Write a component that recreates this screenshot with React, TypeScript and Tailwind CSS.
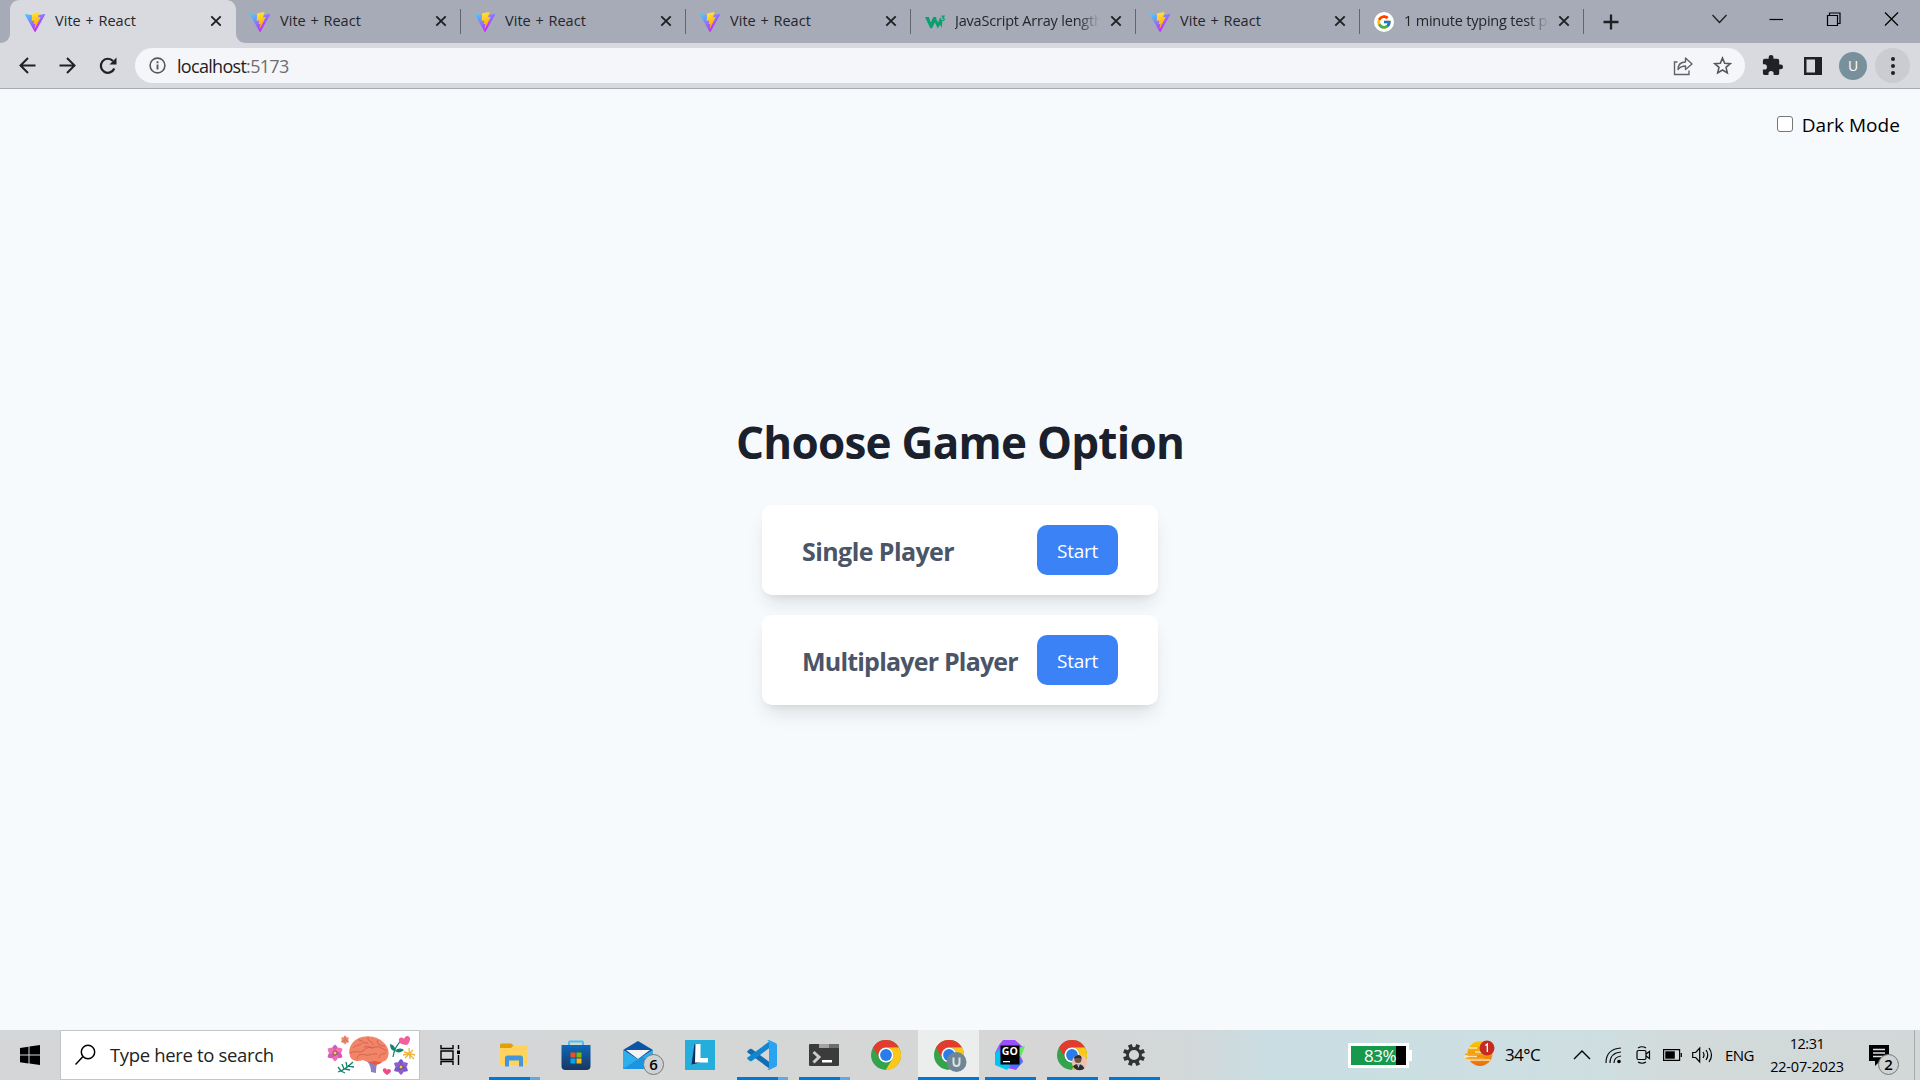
import React from "react";

type P = { children?: React.ReactNode; className?: string };

const seg = "font-['Open_Sans','Noto_Sans',sans-serif]";

function ViteIcon() {
  return (
    <svg width="20" height="20" viewBox="0 0 32 32" className="shrink-0">
      <defs>
        <linearGradient id="va" x1="0" x2="0.6" y1="0.05" y2="0.8">
          <stop offset="0" stopColor="#41d1ff" />
          <stop offset="1" stopColor="#bd34fe" />
        </linearGradient>
        <linearGradient id="vb" x1="0.4" x2="0.6" y1="0" y2="0.9">
          <stop offset="0" stopColor="#ffea83" />
          <stop offset="0.1" stopColor="#ffdd35" />
          <stop offset="1" stopColor="#ffa800" />
        </linearGradient>
      </defs>
      <path fill="url(#va)" d="M31.9 4.6 16.9 31.4a.95.95 0 0 1-1.6 0L.1 4.6a.95.95 0 0 1 1-1.4L16 5.9l14.9-2.7a.95.95 0 0 1 1 1.4Z" />
      <path fill="url(#vb)" d="M22.7.1 11.7 2.2a.4.4 0 0 0-.3.4l-.7 11.4c0 .3.2.5.5.4l3-.7c.3 0 .5.2.5.5l-1 4.5c0 .3.2.5.5.5l1.9-.6c.3 0 .6.2.5.5l-1.4 7c-.1.4.5.6.7.2l.2-.2 9-17.7c.1-.3-.1-.6-.5-.6l-3.200.6a.4.4 0 0 1-.4-.5L23.200.6a.4.4 0 0 0-.5-.5Z" />
    </svg>
  );
}

function GoogleIcon() {
  return (
    <svg width="20" height="20" viewBox="0 0 20 20" className="shrink-0">
      <circle cx="10" cy="10" r="10" fill="#fff" />
      <g transform="translate(2 2) scale(.333)">
        <path fill="#FFC107" d="M43.6 20H24v8h11.300C33.700 32.700 29.200 36 24 36a12 12 0 1 1 7.900-21l5.700-5.700A20 20 0 1 0 43.600 20z" />
        <path fill="#FF3D00" d="m6.300 14.700 6.600 4.800A12 12 0 0 1 32 15l5.700-5.700A20 20 0 0 0 6.300 14.700z" />
        <path fill="#4CAF50" d="M24 44c5.200 0 9.900-2 13.400-5.200l-6.200-5.200A12 12 0 0 1 12.700 28l-6.500 5A20 20 0 0 0 24 44z" />
        <path fill="#1976D2" d="M43.600 20H24v8h11.300a12 12 0 0 1-4.100 5.600l6.200 5.200C37 39.200 44 34 44 24c0-1.300-.1-2.700-.4-4z" />
      </g>
    </svg>
  );
}

function W3Icon() {
  return (
    <svg width="20" height="20" viewBox="0 0 20 20" className="shrink-0">
      <path fill="#0aa06e" d="M0 5h3.800l2 5.600L8.300 5h3.200l-.4 1.200 2 4.600 2-5.800 2.200 5.200-.7 5.800-1.500-3.200-2.400 3.800L10 10.500 7 16.300H5.200z" />
      <path fill="none" stroke="#0aa06e" strokeWidth="1.200" d="M16.300 4.200h2.800l-1.500 1.800c2.300 0 2.200 2.600-.2 2.600l-1.200-.4" />
    </svg>
  );
}

function TabClose() {
  return (
    <svg width="12" height="12" viewBox="0 0 12 12" className="shrink-0" stroke="#1f2023" strokeWidth="1.900">
      <path d="M1.300 1.300 10.700 10.700M10.700 1.300 1.300 10.700" />
    </svg>
  );
}

function Tab({ icon, title, active, sep, fade, narrow }: { icon: React.ReactNode; title: string; active?: boolean; sep?: boolean; fade?: boolean; narrow?: boolean }) {
  return (
    <div className={`relative flex h-[43px] shrink-0 items-center pl-[15px] ${narrow ? "w-[224px]" : "w-[225px]"}`}>
      {active && (
        <svg className="absolute top-0 -left-[10px]" width="246" height="43" viewBox="0 0 246 43">
          <path fill="#d9dae0" d="M0 43C6 43 10 39 10 33V10C10 4 14 0 20 0H226C232 0 236 4 236 10V33C236 39 240 43 246 43Z" />
        </svg>
      )}
      <div className="relative flex items-center">
        {icon}
        <div className={`ml-[10px] h-[22px] w-[145px] overflow-hidden text-[14.500px] leading-[20px] whitespace-nowrap text-[#24262b] ${seg} ${fade ? "tracking-[-0.2px] [mask-image:linear-gradient(to_right,black_85%,transparent)]" : "tracking-[0.05px] [word-spacing:0.800px]"}`}>
          {title}
        </div>
      </div>
      <div className="absolute top-[15px] right-[13px]">
        <TabClose />
      </div>
      {sep && <div className="absolute top-[9px] -right-px h-[25px] w-px bg-[#62656c]" />}
    </div>
  );
}

function TabStrip() {
  return (
    <div className="flex h-[43px] items-center bg-[#a7abb7] pl-[10px]">
      <Tab icon={<ViteIcon />} title="Vite + React" active />
      <Tab icon={<ViteIcon />} title="Vite + React" sep />
      <Tab icon={<ViteIcon />} title="Vite + React" sep />
      <Tab icon={<ViteIcon />} title="Vite + React" sep />
      <Tab icon={<W3Icon />} title="JavaScript Array length" sep fade />
      <Tab icon={<ViteIcon />} title="Vite + React" sep narrow />
      <Tab icon={<GoogleIcon />} title="1 minute typing test pa" sep narrow fade />
      <svg className="ml-[20px] shrink-0" width="16" height="16" viewBox="0 0 16 16" stroke="#1f2023" strokeWidth="2.300">
        <path d="M8 .500V15.500M.500 8H15.500" />
      </svg>
      <div className="mb-[5px] ml-auto flex items-center">
        <svg width="58" height="20" viewBox="0 0 58 20" fill="none" stroke="#1a1a1a" strokeWidth="1.200"><path d="m22.500 6 7 7.500 7-7.500" /></svg>
        <svg width="57" height="20" viewBox="0 0 57 20" fill="none" stroke="#000" strokeWidth="1.200"><path d="M21.500 10.500h13.500" /></svg>
        <svg width="58" height="20" viewBox="0 0 58 20" fill="none" stroke="#000" strokeWidth="1.200"><path d="M22.500 6.500h10v10h-10zM24.500 6.500v-2.500h10.500v10.500h-2.500" /></svg>
        <svg width="57" height="20" viewBox="0 0 57 20" fill="none" stroke="#000" strokeWidth="1.200"><path d="m22 3.500 13 13M35 3.500l-13 13" /></svg>
      </div>
    </div>
  );
}

function Toolbar() {
  return (
    <div className="flex h-[46px] items-center border-b border-[#a9abb0] bg-[#d9dae0] pl-[18px]">
      <svg width="20" height="20" viewBox="0 0 20 20" fill="none" stroke="#202124" strokeWidth="2"><path d="M17.500 9.500H2.500M10 2 2.500 9.500 10 17" /></svg>
      <svg className="ml-[20px]" width="20" height="20" viewBox="0 0 20 20" fill="none" stroke="#202124" strokeWidth="2"><path d="M1.500 9.500H16.500M9 2l7.500 7.500L9 17" /></svg>
      <svg className="ml-[20px]" width="20" height="20" viewBox="0 0 20 20" fill="none" stroke="#202124" strokeWidth="2.200"><path d="M16.300 12.500A7 7 0 1 1 15 5" /><path d="M18.500 1.500v7h-7z" fill="#202124" stroke="none" /></svg>
      <div className="ml-[17px] flex h-[35px] w-[1610px] items-center rounded-full bg-[#f5f6f9] pl-[14px]">
        <svg width="17" height="17" viewBox="0 0 17 17" fill="none" stroke="#55585d" strokeWidth="1.600"><circle cx="8.500" cy="8.500" r="7.400" /><path d="M8.500 7.500v5M8.500 4.300v1.900" strokeWidth="1.900" /></svg>
        <div className={`ml-[11px] text-[18px] leading-[24px] tracking-[-0.700px] text-[#202124] ${seg}`}>localhost<span className="text-[#6b6e73]">:5173</span></div>
        <svg className="ml-auto" width="20" height="20" viewBox="0 0 20 20" fill="none" stroke="#5f6368" strokeWidth="1.400"><path d="M4.500 6H1.500v12.500H16v-4" /><path d="M5 13.500C5 8.500 8 6 12.500 6V2L19 8l-6.500 5.500V10C9.500 10 7 11 5 13.500z" strokeLinejoin="round" /></svg>
        <svg className="mr-[13px] ml-[20px]" width="19" height="19" viewBox="0 0 19 19" fill="none" stroke="#55585d" strokeWidth="1.600"><path d="m9.500 2 2.200 5.200 5.600.5-4.300 3.700 1.300 5.500-4.800-2.900-4.800 2.900L6 11.400 1.700 7.700l5.600-.5z" /></svg>
      </div>
      <svg className="ml-[16px]" width="23" height="23" viewBox="0 0 24 24" fill="#202124"><path d="M20.500 11H19V7a2 2 0 0 0-2-2h-4V3.500a2.500 2.500 0 0 0-5 0V5H4a2 2 0 0 0-2 2v3.800h1.500a2.700 2.700 0 0 1 0 5.400H2V20c0 1.100.9 2 2 2h3.800v-1.500a2.700 2.700 0 0 1 5.400 0V22H17a2 2 0 0 0 2-2v-4h1.500a2.500 2.500 0 0 0 0-5z" /></svg>
      <svg className="ml-[20px]" width="18" height="18" viewBox="0 0 18 18"><path fill="#202124" fillRule="evenodd" d="M0 0h18v18H0zM2.500 2.500v13h8.500v-13z" /></svg>
      <div className={`ml-[17px] flex h-[28px] w-[28px] items-center justify-center rounded-full bg-[#78909c] text-[14px] text-white ${seg}`}>U</div>
      <div className="ml-[8px] flex h-[35px] w-[35px] flex-col items-center justify-center gap-[3px] rounded-full bg-[#cbccd1]">
        <i className="h-[4px] w-[4px] rounded-full bg-[#202124]" />
        <i className="h-[4px] w-[4px] rounded-full bg-[#202124]" />
        <i className="h-[4px] w-[4px] rounded-full bg-[#202124]" />
      </div>
    </div>
  );
}

function Option({ label, tracking }: { label: string; tracking: string }) {
  return (
    <div className="flex h-[90px] w-[396px] items-center justify-between rounded-[10px] bg-white px-[40px] shadow-[0_12px_19px_-4px_rgba(0,0,0,0.1),0_5px_8px_-5px_rgba(0,0,0,0.1)]">
      <div className={`pt-[2px] text-[25px] leading-[35px] font-bold whitespace-nowrap text-[#4a5568] ${tracking}`}>{label}</div>
      <button className="h-[50px] w-[81px] shrink-0 rounded-[10px] bg-[#3b82f6] pt-[2px] text-[19px] leading-[30px] tracking-[-0.3px] text-white">Start</button>
    </div>
  );
}

function Page() {
  return (
    <main className={`flex h-[941px] flex-col bg-[#f7fafc] ${seg}`}>
      <label className="flex h-[70px] items-center justify-end pr-[20px] text-[19px] text-black">
        <span className="mr-[9px] h-[16px] w-[16px] rounded-[3px] border border-[#767676] bg-white" />
        <span className="pt-[2px] tracking-[0.050px]">Dark Mode</span>
      </label>
      <div className="mt-[258px] flex flex-col items-center">
        <h1 className="text-[44px] leading-[50px] font-bold tracking-[-0.730px] whitespace-nowrap text-[#1a202c]">Choose Game Option</h1>
        <div className="mt-[38px] flex flex-col gap-[20px]">
          <Option label="Single Player" tracking="tracking-[-0.580px]" />
          <Option label="Multiplayer Player" tracking="tracking-[-0.800px]" />
        </div>
      </div>
    </main>
  );
}

function Chrome({ children }: P) {
  return (
    <svg width="34" height="32" viewBox="0 0 34 32">
      <circle cx="15" cy="15" r="15" fill="#34a34b" />
      <path fill="#e33b2e" d="M2 7.500A15 15 0 0 1 28 7.500H15A7.500 7.500 0 0 0 8.500 18.800z" />
      <path fill="#fdc719" d="M28 7.500A15 15 0 0 1 14.700 30l6.800-11.200A7.500 7.500 0 0 0 15 7.500z" />
      <circle cx="15" cy="15" r="7.500" fill="#fff" />
      <circle cx="15" cy="15" r="5.900" fill="#2c7bea" />
      {children}
    </svg>
  );
}

function Task({ children, state }: P & { state?: "run" | "multi" | "active" }) {
  return (
    <div className={`relative flex h-[50px] shrink-0 items-center justify-center ${state === "active" ? "ml-px w-[61px] bg-[#eceeee]" : "w-[62px]"}`}>
      {children}
      {state === "run" && <div className="absolute bottom-0 left-[6px] h-[3px] w-[51px] bg-[#0078d7]" />}
      {state === "active" && <div className="absolute bottom-0 left-0 h-[3px] w-full bg-[#0078d7]" />}
      {state === "multi" && (
        <div className="absolute bottom-0 left-[6px] flex h-[3px]">
          <i className="w-[41px] bg-[#0078d7]" />
          <i className="w-[10px] bg-[#62a9e4]" />
        </div>
      )}
    </div>
  );
}

function Flower({ x, y, s, a, b }: { x: number; y: number; s: number; a: string; b: string }) {
  return (
    <g transform={`translate(${x} ${y}) scale(${s})`}>
      {[0, 60, 120, 180, 240, 300].map((r) => (
        <path key={r} transform={`rotate(${r})`} fill={r % 120 ? a : b} d="M0 0C-5-3-3.500-6.500 0-9 3.500-6.500 5-3 0 0z" />
      ))}
      <circle r="2.200" fill="#f6cb3d" stroke="#463060" strokeWidth=".7" />
    </g>
  );
}

function BrainArt() {
  return (
    <svg width="93" height="44" viewBox="0 0 93 44">
      <path fill="#8d7fc2" d="M39 27c5 3 6 8 6 12l5 1c0-6 1-9 2-12z" />
      <path fill="#f2543a" d="M42 27c3 6 14 7 16-2l-8-3z" />
      <path fill="#f28468" d="M24 23C21 15 27 6 36 4c8-2 16 0 21 5 6 5 7 12 4 17-3 4-9 3-13 2-4 1-8 1-11-1-5 2-12 1-13-4z" />
      <path fill="none" stroke="#c95c4c" strokeWidth=".8" d="M27 15c4-4 7-2 9-5M32 7c5 0 5 4 10 3M42 4c-1 5 5 4 5 8M52 7c-3 4 3 6 7 6M24 20c6-3 10 1 14-3s9-2 12-3 7 2 11 4M31 26c0-5 6-5 9-4s8-2 11-1M53 25c0-4 4-4 7-5M38 14c4-1 7 0 9 2" />
      <Flower x={9} y={20} s={0.95} a="#f070b6" b="#d65bb8" />
      <Flower x={19} y={7} s={0.5} a="#f58c70" b="#ee7a66" />
      <Flower x={75} y={34} s={0.88} a="#8c5fd3" b="#7a56c8" />
      <path stroke="#15836c" strokeWidth="1.300" fill="none" d="M12 39c6-2 10-5 15-10M15 38l-3-4M18 36l-2-5M21 34l-1-5M19 36l5 1M22 33l6 1M15 38l4 2" />
      <path fill="none" stroke="#15836c" strokeWidth="1.200" d="M67 24c1-6 3-12 8-16" />
      <path fill="#15836c" d="M69 18c-4 0-5-4-5-7 4 1 6 4 5 7zm0 0c3-3 6-3 9-1-3 3-7 3-9 1z" />
      <path fill="#f0609c" d="M81 12c-6 0-9-3-8-6 1-2 4-2 5 0 1-4 6-4 6 0 0 2-1 4-3 6z" />
      <path fill="#ee4b86" d="M61 42c-3-2-5-4-4-6 1-1 3-1 4 1 1-2 4-1 4 1 0 1-2 3-4 4z" />
      <path stroke="#edb63a" strokeWidth="1.300" d="m83 15 1 11M78 19l11 3M79 25l8-8M77 22l6-1 5 5" fill="none" />
    </svg>
  );
}

function Taskbar() {
  return (
    <footer className={`flex h-[50px] items-center bg-[linear-gradient(90deg,#d5d6d8_0%,#d6d6d6_55%,#d2d8d9_62%,#c9dde2_66%,#cddfe3_78%,#cfdee0_84%,#d3dada_88%,#d2d8d8_100%)] text-black ${seg}`}>
      <div className="flex h-[50px] w-[60px] shrink-0 items-center justify-center">
        <svg width="20" height="20" viewBox="0 0 20 20"><path d="M0 3 8.500 1.700V9.500H0zM9.500 1.500 20 0v9.500H9.500zM0 10.500h8.500v7.900L0 17.200zM9.500 10.500H20V20L9.500 18.500z" /></svg>
      </div>
      <div className="mr-px flex h-[50px] w-[360px] shrink-0 items-center border border-[#c4c5c7] bg-white pl-[14px]">
        <svg width="21" height="22" viewBox="0 0 21 22" fill="none" stroke="#000" strokeWidth="1.500"><circle cx="13" cy="8" r="6.700" /><path d="M8 12.500.500 20.500" /></svg>
        <div className="ml-[14px] text-[18.500px] tracking-[-0.340px] whitespace-nowrap text-[#222]">Type here to search</div>
        <div className="ml-auto"><BrainArt /></div>
      </div>
      <Task><svg width="22" height="20" viewBox="0 0 22 20" fill="none" stroke="#000" strokeWidth="1.400" className="mr-[2px]"><path d="M1 0v3.500h12V0M1 6h12v8.500H1zM1 20v-3.500h12V20M18.500 0v4M18.500 10v10" /><path d="M17 5.500h3v3.500h-3z" fill="#000" stroke="none" /></svg></Task>
      <Task state="multi">
        <svg width="28" height="24" viewBox="0 0 28 24"><path fill="#e2a006" d="M0 2Q0 .500 1.500.500h10l2 2V6H0z" /><path fill="#ffd35d" d="M0 5h11l2.500-2.500H27V22H0z" /><path fill="#4496dc" d="M5 23.500V15q0-2.500 2.500-2.500h13q2.500 0 2.500 2.500v8.500h-4v-6H9v6z" /></svg>
      </Task>
      <Task>
        <svg width="30" height="30" viewBox="0 0 30 30"><defs><linearGradient id="st" x1="0" y1="0" x2="0" y2="1"><stop stopColor="#0b69b9" /><stop offset="1" stopColor="#1b3560" /></linearGradient></defs><path fill="none" stroke="#45c2f4" strokeWidth="2" d="M8 7V2.500Q8 1.500 9 1.500h12q1 0 1 1V7" /><path fill="url(#st)" d="M.500 5h29v21q0 4-4 4h-21q-4 0-4-4z" /><path fill="#f25022" d="M9.500 12.500h5v5h-5z" /><path fill="#7fba00" d="M15.500 12.500h5v5h-5z" /><path fill="#00a4ef" d="M9.500 18.500h5v5h-5z" /><path fill="#ffb900" d="M15.500 18.500h5v5h-5z" /></svg>
      </Task>
      <Task>
        <svg width="30" height="28" viewBox="0 0 30 28"><path fill="#0b55a4" d="M0 9 15 0l15 9-15 10z" /><path fill="#f4f4f4" d="M3 9h24L15 18z" /><path fill="#2dafec" d="M0 9l15 9.500L30 9v19H0z" /><path fill="#1d94df" d="M0 28 20 15l10 13z" /></svg>
        <div className="absolute top-[24px] left-[36px] flex h-[21px] w-[21px] items-center justify-center rounded-full border border-[#777] bg-[#cfd2d2] text-[15px] leading-none font-semibold">6</div>
      </Task>
      <Task>
        <svg width="30" height="30" viewBox="0 0 30 30"><path fill="#25aedb" d="M0 0h30v30H0z" /><path fill="#0d2d5c" d="M9.500 4 12 5v14l3 3.500L6.500 24.500z" /><path fill="#fff" d="M10.500 4h5v14h7.500v4.500H10z" /></svg>
      </Task>
      <Task state="multi">
        <svg width="30" height="30" viewBox="0 0 30 30"><path fill="#0f6eb4" d="M.500 11 2.800 9q1-.700 2 0L23 22.500v6.500L.500 12.500q-.700-.700 0-1.500z" /><path fill="#1286cf" d="M.500 19 2.800 21q1 .700 2 0L23 7.500V1L.500 17.500q-.700.700 0 1.500z" /><path fill="#2aa3f0" d="m22 0 7 3.200q1 .5 1 1.700v20.200q0 1.200-1 1.700L22 30q-1.200 0-2-1 2 .8 2-1.500v-25q0-2.300-2-1.500 1-1 2-1z" /></svg>
      </Task>
      <Task state="multi">
        <svg width="30" height="22" viewBox="0 0 30 22"><path fill="#3b3b3b" d="M0 1q0-1 1-1h28q1 0 1 1v20q0 1-1 1H1q-1 0-1-1z" /><path fill="#a3a3a3" d="M10 0h10v4H10z" /><path fill="#6d6d6d" d="M20 0h9q1 0 1 1v3H20z" /><path d="m4.500 8 5.500 5-5.500 5.500" fill="none" stroke="#ccc" strokeWidth="3" /><path fill="#fff" d="M13 16h10v2.500H13z" /></svg>
      </Task>
      <Task><div className="ml-[4px] h-[30px]"><Chrome /></div></Task>
      <Task state="active"><div className="ml-[4px] h-[30px]"><Chrome><circle cx="22.500" cy="22" r="10" fill="#6f8792" /><path d="M19.500 17.500v5q0 3.500 3 3.500t3-3.500v-5" fill="none" stroke="#d9e2e5" strokeWidth="2" /></Chrome></div></Task>
      <Task state="run">
        <svg width="30" height="30" viewBox="0 0 30 30"><path fill="#9a50ff" d="M8 0h12l8 7-3 8 3 6-7 9-9-2-9-6L0 13l4-8z" /><path fill="#00c6f4" d="M0 14 4 9l3 14 10 1-5 6-5-2-7-3z" /><path fill="#67e56b" d="m23 8 7-2-4 11-3-2z" /><path fill="#3d75ff" d="m14 22 11-3 3 3-6 6-7-2z" /><path fill="#000" d="M5.500 5.500h19v19h-19z" /><path fill="#fff" d="M8 21h7v1.300H8z" /><text x="6.800" y="14.800" fill="#fff" fontSize="10.500" fontWeight="700" fontFamily="Open Sans, sans-serif">GO</text></svg>
      </Task>
      <Task state="run"><div className="ml-[4px] h-[30px]"><Chrome><clipPath id="av"><circle cx="22.500" cy="22.500" r="7.700" /></clipPath><g clipPath="url(#av)"><path fill="#ecc1ad" d="M14 14h18v18H14z" /><circle cx="21" cy="19.500" r="3.500" fill="#735247" /><path fill="#2d2c30" d="M17 19q0-4 4-4t3.500 4q-3-2.500-7.500 0zM15 31q0-7 6-7t7 7z" /><path fill="#a7bed0" d="m20 24 1.500 4L23 24z" /></g></Chrome></div></Task>
      <Task state="run">
        <svg width="22" height="22" viewBox="0 0 22 22"><g fill="#333">{[0, 45, 90, 135, 180, 225, 270, 315].map((r) => <path key={r} transform={`rotate(${r + 22.5} 11 11)`} d="M9 0h4v5H9z" />)}</g><circle cx="11" cy="11" r="6.500" fill="none" stroke="#333" strokeWidth="2.800" /></svg>
      </Task>
      <div className="ml-[183px] flex shrink-0 items-center">
        <div className="flex h-[25px] w-[61px] border-[3px] border-white bg-black">
          <div className="flex w-[45px] items-center justify-end bg-[#16994a] text-[17px] leading-none tracking-[-0.5px] text-white">83%</div>
        </div>
        <div className="h-[11px] w-[3px] bg-white" />
      </div>
      <svg className="mb-[5px] ml-[52px] shrink-0" width="32" height="28" viewBox="0 0 32 28"><defs><linearGradient id="sn" x1="0" y1="0" x2="0" y2="1"><stop stopColor="#fccb0a" /><stop offset="1" stopColor="#e96a0b" /></linearGradient></defs><circle cx="16" cy="14.500" r="12.500" fill="url(#sn)" /><path stroke="#fbe3b4" strokeWidth="1.300" d="M5 9h8M11 13h10M0 17.500h13M4 21h22" /><path stroke="#f5a524" strokeWidth="1.500" d="M1 15.300h20M2 19.500h18" /><circle cx="23" cy="9" r="7.500" fill="#c62b22" /><path stroke="#fff" strokeWidth="1.300" fill="none" d="m21.300 6.500 2-1.500v8" /></svg>
      <div className="ml-[9px] w-[38px] shrink-0 text-[17px] tracking-[-0.6px] whitespace-nowrap">34°C</div>
      <svg className="ml-[30px] shrink-0" width="18" height="12" viewBox="0 0 18 12" fill="none" stroke="#000" strokeWidth="1.400"><path d="m1 10 8-8 8 8" /></svg>
      <svg className="ml-[14px] shrink-0" width="17" height="17" viewBox="0 0 17 17" fill="none" stroke="#111" strokeWidth="1.200"><path d="M1 16Q1 2 16 1M5 16Q5 6 16 5M9 16Q9 10 16 9" /><circle cx="14" cy="14.500" r="1.800" fill="#000" stroke="none" /></svg>
      <svg className="ml-[14px] shrink-0" width="16" height="18" viewBox="0 0 16 18" fill="none" stroke="#000" strokeWidth="1.200"><rect x="1" y="4.500" width="9" height="9" rx="1.500" /><path d="m10 8 3.500-2.500v7L10 10M2 2Q6-.500 10 2M2 16q4 2.500 8 0" /></svg>
      <svg className="ml-[11px] shrink-0" width="19" height="12" viewBox="0 0 19 12"><path fill="none" stroke="#000" strokeWidth="1.200" d="M.600.600h16v10.800h-16zM18.300 4v4" /><path d="M2.300 2.300h9.500v7.400H2.300z" /></svg>
      <svg className="ml-[10px] shrink-0" width="21" height="18" viewBox="0 0 21 18" fill="none" stroke="#000" strokeWidth="1.200"><path d="M.700 6.500h3l4-4.500v14l-4-4.500h-3zM11 6q2 3 0 6M14 4q3.500 5 0 10M17 2q5 7 0 14" /></svg>
      <div className="ml-[12px] w-[29px] shrink-0 text-[15px] tracking-[-0.6px]">ENG</div>
      <div className="ml-[8px] flex w-[90px] shrink-0 flex-col items-center text-[14.500px] leading-[23px] tracking-[-0.200px] whitespace-nowrap"><span className="tracking-[-0.500px]">12:31</span><span>22-07-2023</span></div>
      <div className="relative ml-[17px] h-[30px] w-[32px] shrink-0">
        <svg width="20" height="22" viewBox="0 0 20 22" className="mt-[5px]"><path d="M0 0h20v16h-9l-5 5v-5H0z" /><path stroke="#dde2e2" strokeWidth="1.300" d="M4 4.500h12M4 8h12M4 11.500h12" /></svg>
        <div className="absolute top-[14px] left-[9px] flex h-[21px] w-[21px] items-center justify-center rounded-full border border-[#777] bg-[#cfd3d3] text-[15px] leading-none font-semibold">2</div>
      </div>
      <div className="ml-auto h-[50px] w-[6px] border-l border-[#a6abab]" />
    </footer>
  );
}

export default function App() {
  return (
    <div className="flex h-[1080px] w-[1920px] flex-col overflow-hidden">
      <TabStrip />
      <Toolbar />
      <Page />
      <Taskbar />
    </div>
  );
}
